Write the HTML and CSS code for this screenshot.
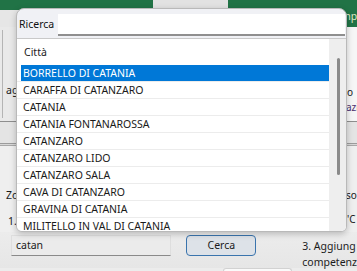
FILE: index.html
```html
<!DOCTYPE html>
<html lang="it">
<head>
<meta charset="utf-8">
<link rel="stylesheet" href="styles.css">
</head>
<body>
<div class="app">
  <div class="topbar">
    <div class="tb-green tb-a"></div>
    <div class="tb-tab"></div>
    <div class="tb-green tb-b"></div>
    <div class="tb-cap">Comp</div>
  </div>
  <div class="band band-a">
    <div class="side-left"><div class="leftbox"><span class="ag">ag</span></div></div>
    <div class="side-right"><span class="r-o">o</span><span class="r-azi">azi</span></div>
  </div>
  <div class="rule-dark"></div>
  <div class="band band-b"></div>
  <div class="rule-double"></div>
  <div class="band band-c">
    <div class="side-left"><span class="l-zo">Zo</span><span class="l-1">1.</span></div>
    <div class="side-right"><span class="r-so">so</span><span class="r-c">'C</span></div>
  </div>
  <div class="bottom">
    <div class="inp">catan</div>
    <div class="btn">Cerca</div>
    <div class="note">3. Aggiung<br>competenz</div>
  </div>
  <div class="next"></div>
</div>

<div class="popup">
  <div class="search">
    <span class="search-label">Ricerca</span>
    <div class="search-input"></div>
  </div>
  <div class="listbox">
    <div class="items">
      <div class="header">Città</div>
      <div class="row sel"><div class="cell">BORRELLO DI CATANIA</div></div>
      <div class="row"><div class="cell">CARAFFA DI CATANZARO</div></div>
      <div class="row"><div class="cell">CATANIA</div></div>
      <div class="row"><div class="cell">CATANIA FONTANAROSSA</div></div>
      <div class="row"><div class="cell">CATANZARO</div></div>
      <div class="row"><div class="cell">CATANZARO LIDO</div></div>
      <div class="row"><div class="cell">CATANZARO SALA</div></div>
      <div class="row"><div class="cell">CAVA DI CATANZARO</div></div>
      <div class="row"><div class="cell">GRAVINA DI CATANIA</div></div>
      <div class="row"><div class="cell">MILITELLO IN VAL DI CATANIA</div></div>
    </div>
    <div class="scroll"><div class="thumb"></div></div>
  </div>
</div>
</body>
</html>
```

FILE: styles.css
```css
* { box-sizing: border-box; }
html, body { margin: 0; padding: 0; }
body {
  width: 357px;
  height: 271px;
  overflow: hidden;
  position: relative;
  background: #ececec;
  font-family: "Noto Sans", "Liberation Sans", Arial, sans-serif;
  font-size: 10.5px;
  color: #1c1c1c;
}
.app { display: flex; flex-direction: column; height: 271px; }

.topbar { display: flex; align-items: flex-start; height: 27px; background: #e6e6e6; flex-shrink: 0; }
.tb-green { background: #217346; }
.tb-a { width: 153px; height: 10px; }
.tb-tab { width: 75px; height: 8px; background: #e2e2e2; }
.tb-b { flex: 1; height: 10px; }
.tb-cap {
  width: 30px; height: 27px; background: #217346; color: #dfe9c6;
  padding-left: 1px; padding-top: 9px; line-height: 14px; font-size: 10.5px; white-space: nowrap; overflow: hidden;
}

.band { display: flex; justify-content: space-between; flex-shrink: 0; }
.side-left { width: 16px; display: flex; flex-direction: column; white-space: nowrap; }
.side-right { width: 11px; display: flex; flex-direction: column; white-space: nowrap; font-size: 10px; }

.band-a { height: 94px; background: #e9e9e9; }
.band-a .side-left { padding-top: 3px; padding-bottom: 3px; }
.leftbox { flex: 1; margin-left: 2px; border-left: 1px solid #b4b4b4; padding-left: 3px; padding-top: 53px; }
.ag { line-height: 14px; }
.band-a .side-right { background: #f6f6f6; padding-top: 58px; }
.r-o { line-height: 14px; padding-left: 1px; }
.r-azi { line-height: 16px; color: #4a2f6e; }

.rule-dark { height: 1px; background: #8e8e8e; flex-shrink: 0; }
.band-b { height: 21px; background: #e4e4e4; }
.rule-double { height: 3px; border-top: 1px solid #9c9c9c; border-bottom: 1px solid #a8a8a8; background: #d8d8d8; flex-shrink: 0; }

.band-c { height: 86px; background: #efefef; }
.band-c .side-left { padding-left: 6px; padding-top: 42px; }
.l-zo { line-height: 14px; }
.l-1 { line-height: 14px; margin-top: 12px; padding-left: 2px; }
.band-c .side-right { padding-top: 42px; }
.r-so { line-height: 14px; }
.r-c { line-height: 14px; margin-top: 10px; padding-left: 1px; }

.bottom { display: flex; align-items: flex-start; padding-top: 3px; padding-left: 11px; height: 36px; background: linear-gradient(#ececec, #e6e6e6); flex-shrink: 0; }
.inp {
  width: 163px; height: 21px; background: #ebebeb; border: 1px solid #dedede; border-bottom: 1px solid #8a8a8a;
  padding-left: 4px; line-height: 18px; color: #1a1a1a;
}
.btn {
  margin-left: 15px; width: 71px; height: 21px; border: 1px solid #3a74ad; border-radius: 4px;
  background: #dde2e8; text-align: center; line-height: 18px; color: #1a1a1a;
}
.note { margin-left: 46px; padding-top: 3px; line-height: 16px; white-space: nowrap; }
.next { margin-left: 223px; width: 69px; height: 4px; background: #fafafa; border: 1px solid #d2d2d2; border-bottom: 0; border-radius: 3px 3px 0 0; flex-shrink: 0; }

.popup {
  position: absolute; left: 16px; top: 8px; width: 331px; height: 224px;
  background: #f0f1f5; border: 1px solid #b9b9b9; border-radius: 8px 8px 6px 6px;
  box-shadow: 0 2px 6px rgba(0,0,0,0.22);
  overflow: hidden; display: flex; flex-direction: column;
}
.search { display: flex; align-items: flex-start; height: 29px; padding-top: 5px; flex-shrink: 0; }
.search-label { width: 41px; padding-left: 2px; line-height: 21px; color: #111; }
.search-input { flex: 1; margin-right: 1px; height: 22px; background: #ffffff; border-bottom: 2px solid #8f8f8f; }

.listbox { flex: 1; min-height: 0; display: flex; background: #ffffff; border-top: 1px solid #c9c9c9; }
.items { flex: 1; display: flex; flex-direction: column; overflow: hidden; }
.header { height: 26px; line-height: 26px; padding-left: 7px; color: #1a1a1a; flex-shrink: 0; }
.row { height: 17px; border-bottom: 1px solid #ececec; flex-shrink: 0; padding-left: 4px; }
.cell { height: 16px; line-height: 16px; padding-left: 2px; color: #1a1a1a; white-space: nowrap; }
.row.sel .cell { background: #0078d7; color: #ffffff; }
.scroll { width: 17px; background: #eeeeee; padding-top: 19px; }
.thumb { width: 3px; height: 117px; margin-left: 8px; background: #8a8a8a; border-radius: 2px; }
```
